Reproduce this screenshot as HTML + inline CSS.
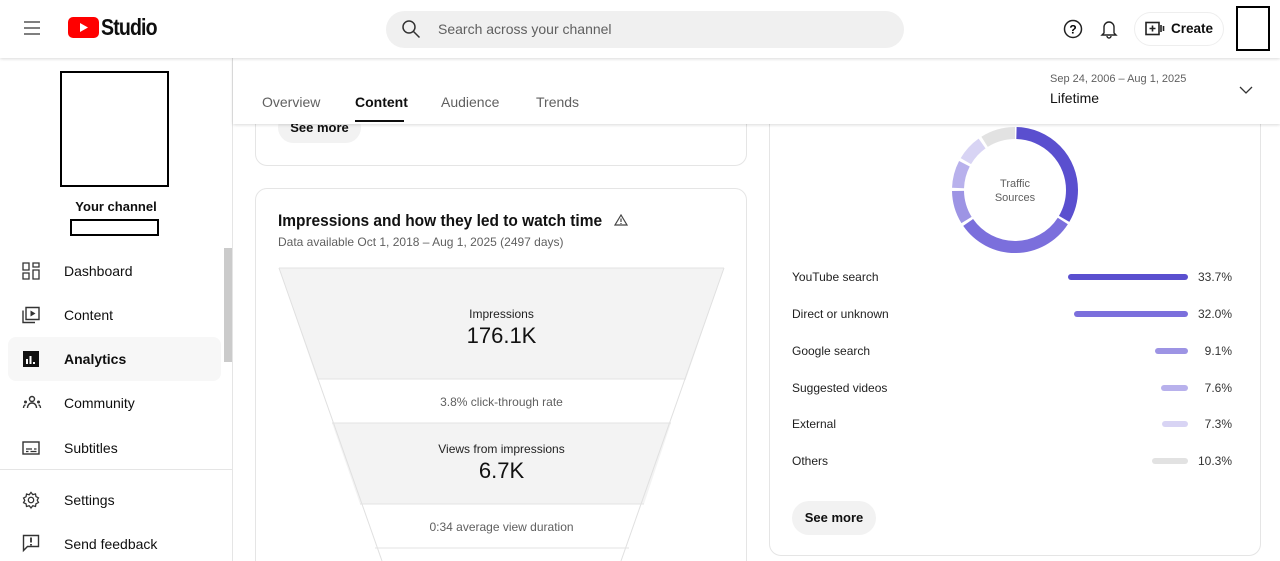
<!DOCTYPE html>
<html style="overflow:hidden;height:561px"><head><meta charset="utf-8"><style>
*{margin:0;padding:0;box-sizing:border-box}
body{width:1280px;height:561px;overflow:hidden;background:#fff;font-family:"Liberation Sans",Roboto,sans-serif;color:#0f0f0f;position:relative}
.abs{position:absolute}
.nav{position:absolute;left:22px;font-size:14px;display:flex;align-items:center}
.nav span{position:absolute;left:42px;white-space:nowrap}
.row{position:absolute;left:792px;width:440px;font-size:12px;color:#1f1f1f}
.row .bar{position:absolute;height:6px;border-radius:3px;top:4px;right:44px}
.row .pct{position:absolute;right:0;top:0;color:#333}
</style></head><body>
<div class="abs" style="left:0;top:0;width:1280px;height:58px;background:#fff;box-shadow:0 1px 3px rgba(0,0,0,.15);z-index:5">
 <svg class="abs" style="left:23px;top:20px" width="18" height="16"><path d="M1 2h16M1 8h16M1 14h16" stroke="#333" stroke-width="1.3"/></svg>
 <svg class="abs" style="left:68px;top:17px" width="31" height="21"><rect width="31" height="21" rx="5" fill="#f00"/><path d="M12 6l8 4.5-8 4.5z" fill="#fff"/></svg>
 <div class="abs" style="left:101px;top:14px;font-size:23px;font-weight:bold;letter-spacing:-1px;transform:scaleX(.85);transform-origin:left">Studio</div>
 <div class="abs" style="left:386px;top:11px;width:518px;height:37px;border-radius:19px;background:#f0f0f0"></div>
 <svg class="abs" style="left:401px;top:19px" width="20" height="20"><circle cx="8" cy="8" r="6" fill="none" stroke="#333" stroke-width="1.5"/><path d="M12.5 12.5l6 6" stroke="#333" stroke-width="1.5"/></svg>
 <div class="abs" style="left:438px;top:21px;font-size:14px;color:#606060">Search across your channel</div>
 <svg class="abs" style="left:1063px;top:19px" width="20" height="20"><circle cx="10" cy="10" r="8.5" fill="none" stroke="#222" stroke-width="1.5"/><text x="10" y="14.5" font-size="12" font-weight="bold" text-anchor="middle" font-family="Liberation Sans">?</text></svg>
 <svg class="abs" style="left:1100px;top:18px" width="18" height="21"><path d="M4 15V9a5 5 0 0110 0v6l2 2H2z M7 18a2 2 0 004 0" fill="none" stroke="#222" stroke-width="1.4"/></svg>
 <div class="abs" style="left:1134px;top:12px;width:90px;height:34px;border-radius:17px;border:1px solid #eee"></div>
 <svg class="abs" style="left:1145px;top:21px" width="20" height="16"><rect x="1" y="1.5" width="13" height="12" fill="none" stroke="#222" stroke-width="1.6"/><path d="M7.5 4.5v6M4.5 7.5h6M16 4v7M18.5 5v5" stroke="#222" stroke-width="1.6"/></svg>
 <div class="abs" style="left:1171px;top:21px;font-size:13.5px;font-weight:bold">Create</div>
 <div class="abs" style="left:1236px;top:6px;width:34px;height:45px;border:2px solid #000"></div>
</div>
<div class="abs" style="left:0;top:58px;width:233px;height:503px;border-right:1px solid #e5e5e5">
 <div class="abs" style="left:60px;top:13px;width:109px;height:116px;border:2px solid #000"></div>
 <div class="abs" style="left:0;top:141px;width:232px;text-align:center;font-size:13px;font-weight:bold">Your channel</div>
 <div class="abs" style="left:70px;top:161px;width:89px;height:17px;border:2px solid #000"></div>
 <div class="abs" style="left:8px;top:279px;width:213px;height:44px;border-radius:8px;background:#f7f7f7"></div>
 <div class="abs" style="left:224px;top:190px;width:8px;height:114px;background:#cbcbcb"></div>
 <div class="abs" style="left:0;top:411px;width:232px;height:1px;background:#e5e5e5"></div>
</div>
<div class="nav" style="top:262px"><svg width="18" height="18"><path d="M1 1h6v7H1zM11 1h6v4h-6zM1 11h6v6H1zM11 8h6v9h-6z" fill="none" stroke="#333" stroke-width="1.3"/></svg><span>Dashboard</span></div>
<div class="nav" style="top:306px"><svg width="18" height="18"><path d="M4 1.5h13v12H4z M1 4.5v12h12" fill="none" stroke="#333" stroke-width="1.4"/><path d="M8.5 4.5l5 3-5 3z" fill="#333"/></svg><span>Content</span></div>
<div class="nav" style="top:350px"><svg width="18" height="18"><rect x="1" y="1" width="16" height="16" fill="#111"/><path d="M5 9v5M8.5 6v8M12 12v2" stroke="#fff" stroke-width="2"/></svg><span style="font-weight:bold">Analytics</span></div>
<div class="nav" style="top:395px"><svg width="20" height="16"><circle cx="10" cy="4" r="2.5" fill="none" stroke="#333" stroke-width="1.4"/><path d="M5.5 13c0-3 2-5 4.5-5s4.5 2 4.5 5" fill="none" stroke="#333" stroke-width="1.4"/><circle cx="3.5" cy="7" r="1.5" fill="#333"/><circle cx="16.5" cy="7" r="1.5" fill="#333"/><path d="M1.5 13c0-2 1-3 2-3M18.5 13c0-2-1-3-2-3" stroke="#333" stroke-width="1.4" fill="none"/></svg><span>Community</span></div>
<div class="nav" style="top:439px"><svg width="18" height="18"><rect x="1" y="3" width="16" height="12" fill="none" stroke="#333" stroke-width="1.4"/><path d="M4 10h6M12 10h2.5M4 12.5h2.5M8.5 12.5h6" stroke="#333" stroke-width="1.3"/></svg><span>Subtitles</span></div>
<div class="nav" style="top:491px"><svg width="18" height="18"><g transform="scale(.9)"><circle cx="10" cy="10" r="3" fill="none" stroke="#333" stroke-width="1.4"/><path d="M10 1.5l2 2.5 3-.8.5 3 2.8 1.4-1.4 2.6 1.4 2.6-2.8 1.4-.5 3-3-.8-2 2.5-2-2.5-3 .8-.5-3L1.7 13l1.4-2.6L1.7 7.8l2.8-1.4.5-3 3 .8z" fill="none" stroke="#333" stroke-width="1.4"/></g></svg><span>Settings</span></div>
<div class="nav" style="top:534px"><svg width="18" height="19"><path d="M1.5 1.5h15v11H5.5l-4 4z" fill="none" stroke="#333" stroke-width="1.4"/><path d="M9 3.5v5M9 10v1.5" stroke="#333" stroke-width="1.8"/></svg><span>Send feedback</span></div>
<div class="abs" style="left:255px;top:80px;width:492px;height:86px;border:1px solid #e5e5e5;border-radius:12px"></div>
<div class="abs" style="left:278px;top:112px;width:83px;height:31px;border-radius:16px;background:#f2f2f2;font-size:13px;font-weight:bold;text-align:center;line-height:31px">See more</div>
<div class="abs" style="left:255px;top:188px;width:492px;height:400px;border:1px solid #e5e5e5;border-radius:12px"></div>
<div class="abs" style="left:278px;top:211px;font-size:17px;font-weight:bold;color:#111;white-space:nowrap;transform:scaleX(.91);transform-origin:left">Impressions and how they led to watch time</div>
<svg class="abs" style="left:614px;top:214px" width="14" height="12"><path d="M7 1L1 11h12z" fill="none" stroke="#444" stroke-width="1.2"/><path d="M7 4.5v3.5M7 9v1" stroke="#444" stroke-width="1.2"/></svg>
<div class="abs" style="left:278px;top:235px;font-size:12px;color:#606060">Data available Oct 1, 2018 – Aug 1, 2025 (2497 days)</div>
<svg class="abs" style="left:0;top:0" width="760" height="561">
 <polygon points="279,268 724,268 686,379 317,379" fill="#f3f3f3"/>
 <polygon points="332,423 671,423 644,504 360,504" fill="#f3f3f3"/>
 <path d="M279,268 L382,561 M724,268 L621,561" stroke="#e0e0e0" stroke-width="1"/>
 <path d="M279,268H724M317,379H686M332,423H671M360,504H644M375,548H629" stroke="#e3e3e3" stroke-width="1"/>
</svg>
<div class="abs" style="left:279px;top:307px;width:445px;text-align:center;font-size:12px;color:#222">Impressions</div>
<div class="abs" style="left:279px;top:323px;width:445px;text-align:center;font-size:22px;color:#111">176.1K</div>
<div class="abs" style="left:279px;top:395px;width:445px;text-align:center;font-size:12px;color:#606060">3.8% click-through rate</div>
<div class="abs" style="left:279px;top:442px;width:445px;text-align:center;font-size:12px;color:#222">Views from impressions</div>
<div class="abs" style="left:279px;top:458px;width:445px;text-align:center;font-size:22px;color:#111">6.7K</div>
<div class="abs" style="left:279px;top:520px;width:445px;text-align:center;font-size:12px;color:#606060">0:34 average view duration</div>
<div class="abs" style="left:769px;top:80px;width:492px;height:476px;border:1px solid #e5e5e5;border-radius:12px"></div>
<svg class="abs" style="left:950px;top:125px" width="130" height="130">
 <g transform="rotate(-90 65 65)" fill="none" stroke-width="12">
  <circle cx="65" cy="65" r="57" stroke="#5a4fcf" stroke-dasharray="118.2 400" stroke-dashoffset="-1.5"/>
  <circle cx="65" cy="65" r="57" stroke="#7b6fdc" stroke-dasharray="111.6 400" stroke-dashoffset="-122.2"/>
  <circle cx="65" cy="65" r="57" stroke="#9d94e4" stroke-dasharray="30.6 400" stroke-dashoffset="-236.8"/>
  <circle cx="65" cy="65" r="57" stroke="#b8b1ec" stroke-dasharray="25.2 400" stroke-dashoffset="-270.4"/>
  <circle cx="65" cy="65" r="57" stroke="#d8d4f4" stroke-dasharray="24.1 400" stroke-dashoffset="-298.6"/>
  <circle cx="65" cy="65" r="57" stroke="#e2e2e2" stroke-dasharray="33.9 400" stroke-dashoffset="-325.7"/>
 </g>
 <text x="65" y="62" font-size="11" fill="#606060" text-anchor="middle" font-family="Liberation Sans">Traffic</text>
 <text x="65" y="76" font-size="11" fill="#606060" text-anchor="middle" font-family="Liberation Sans">Sources</text>
</svg>
<div class="row" style="top:270px">YouTube search<div class="bar" style="width:120px;background:#5a4fcf"></div><div class="pct">33.7%</div></div>
<div class="row" style="top:307px">Direct or unknown<div class="bar" style="width:114px;background:#7b6fdc"></div><div class="pct">32.0%</div></div>
<div class="row" style="top:344px">Google search<div class="bar" style="width:33px;background:#9d94e4"></div><div class="pct">9.1%</div></div>
<div class="row" style="top:381px">Suggested videos<div class="bar" style="width:27px;background:#b8b1ec"></div><div class="pct">7.6%</div></div>
<div class="row" style="top:417px">External<div class="bar" style="width:26px;background:#d8d4f4"></div><div class="pct">7.3%</div></div>
<div class="row" style="top:454px">Others<div class="bar" style="width:36px;background:#e2e2e2"></div><div class="pct">10.3%</div></div>
<div class="abs" style="left:792px;top:501px;width:84px;height:34px;border-radius:17px;background:#f2f2f2;font-size:13px;font-weight:bold;text-align:center;line-height:34px">See more</div>
<div class="abs" style="left:233px;top:58px;width:1047px;height:66px;background:#fff;box-shadow:0 1px 3px rgba(0,0,0,.15);z-index:4">
 <div class="abs" style="left:29px;top:36px;font-size:14px;color:#606060">Overview</div>
 <div class="abs" style="left:122px;top:36px;font-size:14px;font-weight:bold">Content</div>
 <div class="abs" style="left:122px;top:62px;width:49px;height:2px;background:#0f0f0f"></div>
 <div class="abs" style="left:208px;top:36px;font-size:14px;color:#606060">Audience</div>
 <div class="abs" style="left:303px;top:36px;font-size:14px;color:#606060">Trends</div>
 <div class="abs" style="left:817px;top:15px;font-size:11px;color:#606060">Sep 24, 2006 – Aug 1, 2025</div>
 <div class="abs" style="left:817px;top:32px;font-size:14px;color:#111">Lifetime</div>
 <svg class="abs" style="left:1006px;top:27px" width="14" height="10"><path d="M1 2l6 6 6-6" fill="none" stroke="#333" stroke-width="1.3"/></svg>
</div>
</body></html>
